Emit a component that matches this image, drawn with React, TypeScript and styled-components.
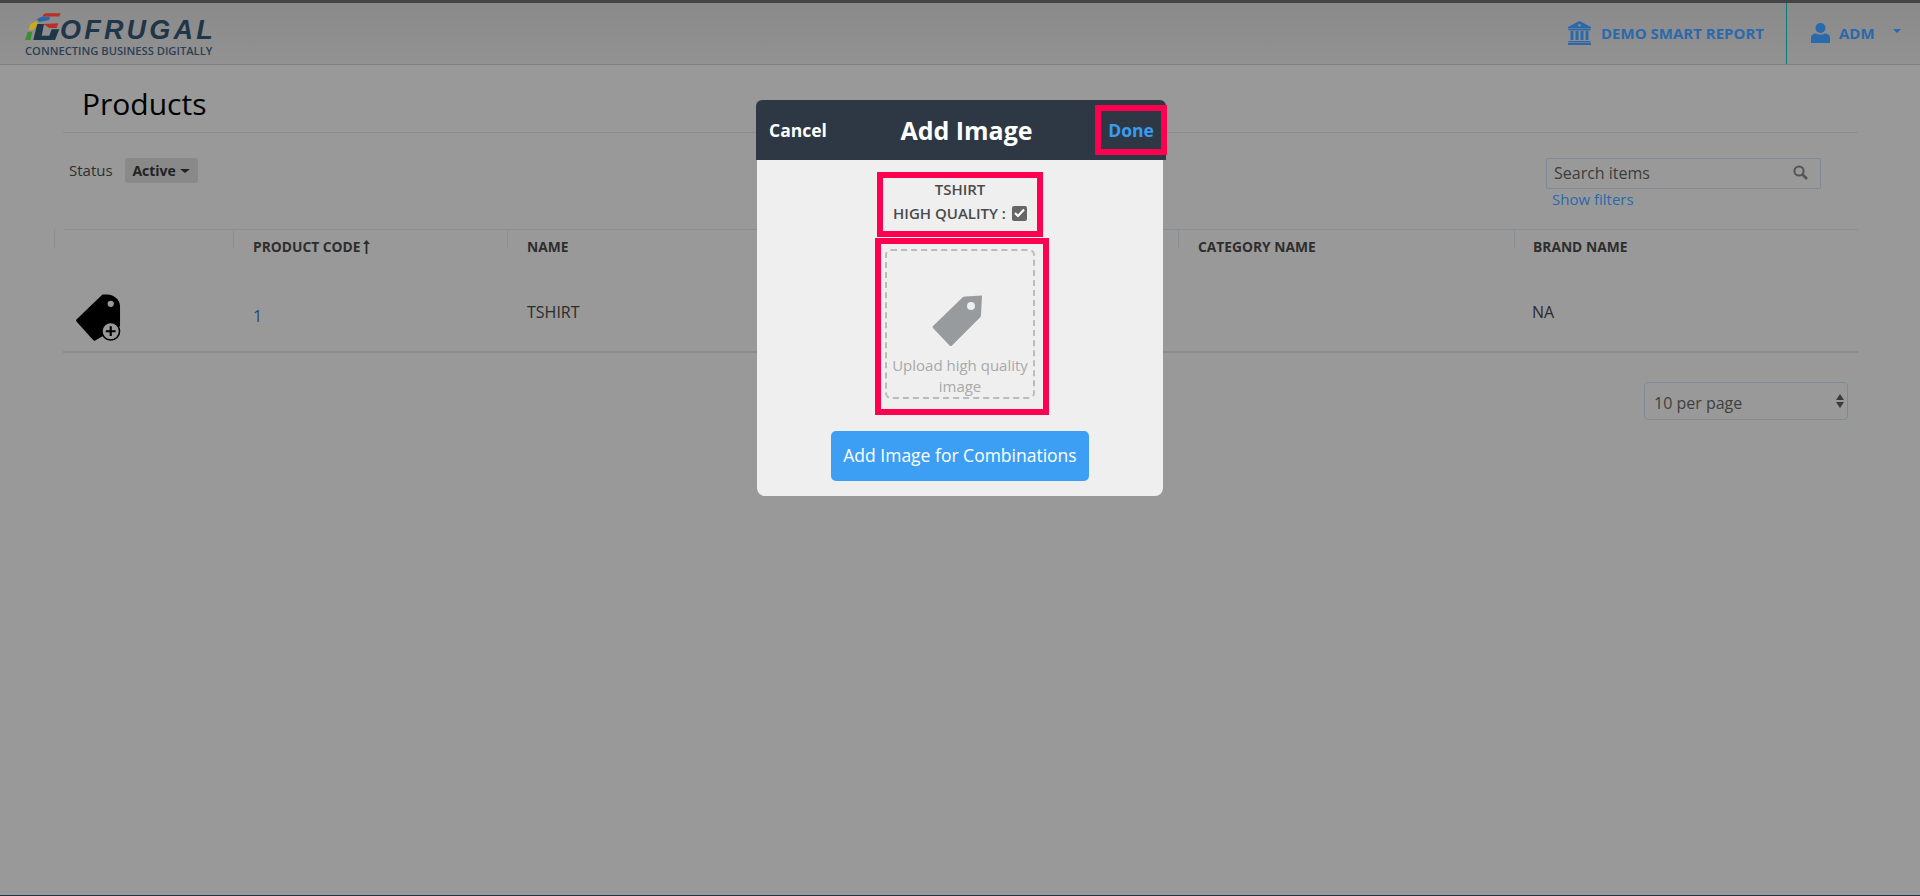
import React from "react";
import styled, { createGlobalStyle } from "styled-components";

const Global = createGlobalStyle`
  html, body { margin: 0; padding: 0; height: 100%; overflow: hidden; }
  body { background: #999; font-family: "Open Sans", "Liberation Sans", sans-serif; color: #333; }
  * { box-sizing: border-box; }
`;

const Page = styled.div`
  position: relative;
  width: 1920px;
  height: 896px;
  background: #999;
  border-top: 3px solid #444;
  border-bottom: 1px solid #1f3547;
  overflow: hidden;
`;

const Header = styled.header`
  height: 62px;
  display: flex;
  align-items: stretch;
  justify-content: space-between;
  background: linear-gradient(#8a8a8a, #929292);
  border-bottom: 1px solid #7f7f7f;
`;

const Logo = styled.div`
  width: 190px;
  margin-left: 25px;
  padding-top: 10px;
  display: flex;
  flex-direction: column;
`;

const LogoTop = styled.div`
  display: flex;
  align-items: flex-end;
  height: 28px;
`;

const LogoMark = styled.svg`
  width: 36px;
  height: 28px;
  flex: none;
`;

const LogoWord = styled.span`
  font: italic 700 27px/21px "Liberation Sans", sans-serif;
  letter-spacing: 3.2px;
  color: #1f3548;
  margin-left: -1px;
  white-space: nowrap;
`;

const LogoTag = styled.span`
  margin-top: 3px;
  font: 600 11.2px/13px "Open Sans", sans-serif;
  color: #2b4054;
  white-space: nowrap;
`;

const HeaderRight = styled.div`
  display: flex;
  align-items: stretch;
`;

const NavItem = styled.div`
  display: flex;
  align-items: center;
  color: #2a69ab;
  font-size: 15px;
  font-weight: 700;
  white-space: nowrap;
`;

const StoreLink = styled(NavItem)`
  padding: 0 22px 2px 0;
  gap: 10px;
  border-right: 1px solid #0d7a78;
`;

const UserMenu = styled(NavItem)`
  width: 133px;
  padding: 0 0 2px 24px;
  gap: 9px;
`;

const Caret = styled.span<{ $half: number; $height: number; $color: string }>`
  display: inline-block;
  border-left: ${(p) => p.$half}px solid transparent;
  border-right: ${(p) => p.$half}px solid transparent;
  border-top: ${(p) => p.$height}px solid ${(p) => p.$color};
`;

const UserCaret = styled(Caret)`
  margin-left: 9px;
  margin-top: -4px;
`;

const Main = styled.main`
  margin: 0 62px 0 63px;
`;

const PageTitle = styled.h1`
  margin: 0;
  height: 68px;
  padding: 18px 0 0 19px;
  font-size: 30px;
  font-weight: 400;
  line-height: 41px;
  color: #000;
  border-bottom: 1px solid #8d8d8d;
`;

const Toolbar = styled.div`
  height: 96px;
  display: flex;
  justify-content: space-between;
  padding: 25px 37px 0 6px;
`;

const StatusGroup = styled.div`
  display: flex;
  align-items: flex-start;
  gap: 12px;
  font-size: 15px;
  line-height: 25px;
  color: #2f2f2f;
`;

const StatusButton = styled.div`
  width: 73px;
  height: 25px;
  display: flex;
  align-items: center;
  justify-content: center;
  gap: 4px;
  background: #898989;
  border-radius: 3px;
  font-size: 14px;
  font-weight: 700;
  color: #222;
`;

const SearchGroup = styled.div`
  width: 275px;
  display: flex;
  flex-direction: column;
`;

const SearchBox = styled.div`
  height: 31px;
  display: flex;
  align-items: center;
  justify-content: space-between;
  padding: 0 12px 2px 7px;
  border: 1px solid #7f8a96;
  border-radius: 2px;
  font-size: 16px;
  color: #3c3c3c;
`;

const ShowFilters = styled.a`
  margin: 1px 0 0 6px;
  font-size: 15px;
  line-height: 19px;
  color: #2a69ab;
`;

const Table = styled.div`
  border-top: 1px solid #888f96;
`;

const Row = styled.div`
  display: grid;
  grid-template-columns: 170px 274px 335px 336px 336px 344px;
`;

const HeadCell = styled.div<{ $inset?: number }>`
  position: relative;
  height: 66px;
  padding: 8px 0 0 ${(p) => p.$inset ?? 20}px;
  font-size: 13.8px;
  font-weight: 700;
  line-height: 18px;
  text-transform: uppercase;
  color: #2e2e2e;
  white-space: nowrap;
  &::before {
    content: "";
    position: absolute;
    left: 0;
    top: -1px;
    height: 19px;
    width: 1px;
    background: #888f96;
  }
`;

const FirstHead = styled(HeadCell)`
  &::before { left: -9px; }
`;

const SortArrow = styled.svg`
  margin-left: 3px;
  vertical-align: -2px;
`;

const BodyRow = styled(Row)`
  height: 57px;
  border-bottom: 2px solid #858c94;
  font-size: 16px;
  color: #2b2b2b;
`;

const IconCell = styled.div`
  padding: 0 0 0 11px;
  margin-top: -2px;
`;

const CodeCell = styled.div`
  padding: 5px 0 0 20px;
  line-height: 30px;
  color: #1f4a78;
`;

const TextCell = styled.div<{ $inset?: number }>`
  padding: 5px 0 0 ${(p) => p.$inset ?? 20}px;
  line-height: 22px;
`;

const Pager = styled.div`
  display: flex;
  justify-content: flex-end;
  padding: 29px 10px 0 0;
`;

const PerPage = styled.div`
  width: 204px;
  height: 38px;
  display: flex;
  align-items: center;
  justify-content: space-between;
  padding: 3px 3px 0 9px;
  border: 1px solid #7f8a96;
  border-radius: 4px;
  font-size: 16px;
  color: #3f3f3f;
`;

const Spinner = styled.span`
  display: flex;
  flex-direction: column;
  gap: 2px;
  margin-top: -3px;
`;

const SpinUp = styled.span`
  border-left: 4px solid transparent;
  border-right: 4px solid transparent;
  border-bottom: 6px solid #3a3a3a;
`;

const SpinDown = styled.span`
  border-left: 4px solid transparent;
  border-right: 4px solid transparent;
  border-top: 6px solid #3a3a3a;
`;

const Modal = styled.section`
  position: absolute;
  left: 756px;
  top: 97px;
  width: 410px;
`;

const ModalHead = styled.div`
  position: relative;
  height: 60px;
  display: flex;
  align-items: center;
  justify-content: center;
  padding-left: 11px;
  background: #2d3844;
  border-radius: 6px 6px 0 0;
  color: #fff;
`;

const Cancel = styled.span`
  position: absolute;
  left: 13px;
  top: 18px;
  font-size: 17.5px;
  font-weight: 700;
  line-height: 24px;
`;

const ModalTitle = styled.h2`
  margin: 0;
  font-size: 25px;
  font-weight: 700;
  line-height: 34px;
`;

const Done = styled.span`
  position: absolute;
  left: 339px;
  top: 5px;
  width: 72px;
  height: 50px;
  display: flex;
  align-items: center;
  justify-content: center;
  border: 6px solid #ff0050;
  font-size: 17.5px;
  font-weight: 700;
  color: #3a9cf0;
`;

const ModalBody = styled.div`
  width: 406px;
  height: 336px;
  margin-left: 1px;
  padding-top: 12px;
  display: flex;
  flex-direction: column;
  align-items: center;
  background: #efefef;
  border-radius: 0 0 8px 8px;
`;

const Highlight = styled.div`
  border: 6px solid #ff0050;
`;

const ProductInfo = styled(Highlight)`
  width: 166px;
  height: 65px;
  display: flex;
  flex-direction: column;
  align-items: center;
  gap: 2px;
  font-size: 15px;
  font-weight: 600;
  line-height: 22px;
  color: #4a4a4a;
`;

const QualityRow = styled.div`
  display: flex;
  align-items: center;
  gap: 6px;
  white-space: nowrap;
`;

const Check = styled.span`
  width: 15px;
  height: 15px;
  display: flex;
  align-items: center;
  justify-content: center;
  border-radius: 2px;
  background: #666;
`;

const UploadFrame = styled(Highlight)`
  width: 174px;
  height: 177px;
  margin: 1px 0 0 4px;
  padding: 5px 4px;
`;

const DropZone = styled.div`
  width: 150px;
  height: 150px;
  display: flex;
  flex-direction: column;
  align-items: center;
  padding-top: 44px;
  border: 2px dashed #bbb;
  border-radius: 6px;
  text-align: center;
  font-size: 15px;
  line-height: 21px;
  color: #a9a9a9;
`;

const DropTag = styled.svg`
  margin-left: -4px;
`;

const DropText = styled.span`
  margin-top: 8px;
`;

const CombineButton = styled.button`
  width: 258px;
  height: 50px;
  margin-top: 16px;
  padding: 0 0 2px;
  border: 0;
  border-radius: 5px;
  background: #3d9ff4;
  color: #fff;
  font: 400 17.5px/24px "Open Sans", sans-serif;
  white-space: nowrap;
`;

const GMark = () => (
  <LogoMark viewBox="0 0 36 28">
    <path d="M0 27 L2.7 18.7 L7.3 18.7 L5.7 27 Z" fill="#3a8f30" />
    <path d="M3.3 17 L5.7 11 L11 7.7 L13.3 11 L8.3 17 Z" fill="#c9a822" />
    <path d="M11.7 6.3 L16.7 3.7 L25 3.7 L24.3 7 L14.3 9 Z" fill="#2b66aa" />
    <path d="M17.7 3 C18.5 1.2 19.5 0.3 21 0.3 L35.7 0.3 L34.2 3.6 L17.7 3.6 Z" fill="#b83028" />
    <path d="M18.3 11 L33.3 10.3 L31.7 15 L24.3 15 Z" fill="#b83028" />
    <path d="M12.3 11 L19 11 L16.7 22.7 L24.3 22.7 L26.7 16.3 L34.3 16.3 L30 27 L8.3 27 Z" fill="#1f3548" />
  </LogoMark>
);

const BankIcon = () => (
  <svg width="23" height="24" viewBox="0 0 23 24" fill="#2a69ab">
    <path d="M11.5 0 L23 6 V7.5 H0 V6 Z" />
    <rect x="0.5" y="8" width="22" height="1.4" />
    <rect x="2.5" y="10" width="3" height="9" />
    <rect x="7.5" y="10" width="3" height="9" />
    <rect x="12.5" y="10" width="3" height="9" />
    <rect x="17.5" y="10" width="3" height="9" />
    <rect x="0.5" y="20" width="22" height="1.4" />
    <rect x="0" y="22" width="23" height="2" />
    <circle cx="11.5" cy="4.3" r="1.3" fill="#8d8d8d" />
  </svg>
);

const UserIcon = () => (
  <svg width="19" height="20" viewBox="0 0 19 20" fill="#2a69ab">
    <circle cx="9.5" cy="5" r="5" />
    <path d="M0 20 V15 C0 12 2 10.5 5 10.5 C7 12 12 12 14 10.5 C17 10.5 19 12 19 15 V20 Z" />
  </svg>
);

const SearchIcon = () => (
  <svg width="15" height="15" viewBox="0 0 15 15" fill="none" stroke="#555" strokeWidth="2">
    <circle cx="6" cy="6" r="4.6" />
    <path d="M9.5 9.5 L14 14" strokeWidth="2.6" />
  </svg>
);

const RowTagIcon = () => (
  <svg width="48" height="47" viewBox="0 0 46 48">
    <path d="M1 26 L27 1 C28 0.5 29 0.5 33 0.5 C39 1 45 5 45.5 12 V33 L21 47 C20 48 19 48 18 47 L1 28 C0.5 27.5 0.5 26.5 1 26 Z" fill="#000" />
    <circle cx="36" cy="10" r="3.2" fill="#999" />
    <circle cx="36" cy="38" r="9" fill="#999" stroke="#000" strokeWidth="1.6" />
    <path d="M36 33 V43 M31 38 H41" stroke="#000" strokeWidth="2.2" />
  </svg>
);

const TagIcon = () => (
  <DropTag width="52" height="52" viewBox="0 0 52 52" fill="#979b9e">
    <path fillRule="evenodd" d="M1 31 L30 3 C31 2 32 1.5 33.5 1.5 L50 0.5 L49 20 C49 21 48.5 22 48 22.5 L20 50.5 C19 51.3 18.5 51.3 17.5 50.5 L1 33 C0.5 32.4 0.5 31.6 1 31 Z M39 7 A4 4 0 1 0 39 15 A4 4 0 1 0 39 7 Z" />
  </DropTag>
);

const CheckMark = () => (
  <svg width="11" height="10" viewBox="0 0 11 10" fill="none" stroke="#fff" strokeWidth="2.2">
    <path d="M1 5 L4 8 L10 1.5" />
  </svg>
);

export default function App() {
  return (
    <>
      <Global />
      <Page>
        <Header>
          <Logo>
            <LogoTop>
              <GMark />
              <LogoWord>OFRUGAL</LogoWord>
            </LogoTop>
            <LogoTag>CONNECTING BUSINESS DIGITALLY</LogoTag>
          </Logo>
          <HeaderRight>
            <StoreLink>
              <BankIcon />
              DEMO SMART REPORT
            </StoreLink>
            <UserMenu>
              <UserIcon />
              ADM
              <UserCaret $half={4} $height={4} $color="#2a69ab" />
            </UserMenu>
          </HeaderRight>
        </Header>
        <Main>
          <PageTitle>Products</PageTitle>
          <Toolbar>
            <StatusGroup>
              Status
              <StatusButton>
                Active <Caret $half={5} $height={4} $color="#222" />
              </StatusButton>
            </StatusGroup>
            <SearchGroup>
              <SearchBox>
                Search items
                <SearchIcon />
              </SearchBox>
              <ShowFilters>Show filters</ShowFilters>
            </SearchGroup>
          </Toolbar>
          <Table>
            <Row>
              <FirstHead />
              <HeadCell>
                Product Code
                <SortArrow width="7" height="14" viewBox="0 0 7 14" fill="#2e2e2e">
                  <path d="M3.5 0 L7 4 H4.4 V14 H2.6 V4 H0 Z" />
                </SortArrow>
              </HeadCell>
              <HeadCell>Name</HeadCell>
              <HeadCell />
              <HeadCell>Category Name</HeadCell>
              <HeadCell $inset={19}>Brand Name</HeadCell>
            </Row>
            <BodyRow>
              <IconCell>
                <RowTagIcon />
              </IconCell>
              <CodeCell>1</CodeCell>
              <TextCell>TSHIRT</TextCell>
              <TextCell />
              <TextCell />
              <TextCell $inset={18}>NA</TextCell>
            </BodyRow>
          </Table>
          <Pager>
            <PerPage>
              10 per page
              <Spinner>
                <SpinUp />
                <SpinDown />
              </Spinner>
            </PerPage>
          </Pager>
        </Main>
        <Modal>
          <ModalHead>
            <Cancel>Cancel</Cancel>
            <ModalTitle>Add Image</ModalTitle>
            <Done>Done</Done>
          </ModalHead>
          <ModalBody>
            <ProductInfo>
              TSHIRT
              <QualityRow>
                HIGH QUALITY :
                <Check>
                  <CheckMark />
                </Check>
              </QualityRow>
            </ProductInfo>
            <UploadFrame>
              <DropZone>
                <TagIcon />
                <DropText>Upload high quality image</DropText>
              </DropZone>
            </UploadFrame>
            <CombineButton>Add Image for Combinations</CombineButton>
          </ModalBody>
        </Modal>
      </Page>
    </>
  );
}
